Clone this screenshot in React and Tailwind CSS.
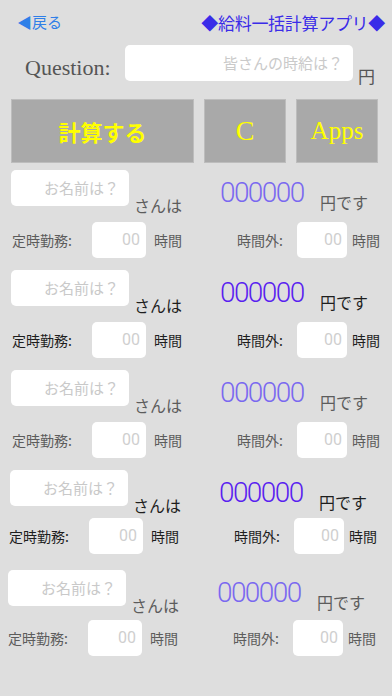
import React from 'react';

const rows = [
  { dark: false, nameMl: 'ml-[11px]', lineMl: 'ml-[12px]', lineMt: 'mt-[16px]' },
  { dark: true, nameMl: 'ml-[11px]', lineMl: 'ml-[12px]', lineMt: 'mt-[16px]' },
  { dark: false, nameMl: 'ml-[11px]', lineMl: 'ml-[12px]', lineMt: 'mt-[16px]' },
  { dark: true, nameMl: 'ml-[10px]', lineMl: 'ml-[9px]', lineMt: 'mt-[12px]' },
  { dark: false, nameMl: 'ml-[8px]', lineMl: 'ml-[8px]', lineMt: 'mt-[14px]' },
];

function WorkerRow({ dark, nameMl, lineMl, lineMt }) {
  const label = dark ? 'text-[#1e1e1e]' : 'text-[#5c5c5c]';
  const num = dark ? 'text-[#5a1ff0]' : 'text-[#7a68f0]';
  return (
    <div className="h-[100px]">
      <div className={`flex items-start h-[36px] ${nameMl}`}>
        <div className="w-[118px] h-[36px] bg-white rounded-[5px] flex items-center justify-end pr-[10px] text-[15px] text-[#c9c9c9]">
          お名前は？
        </div>
        <div className={`w-[91px] pl-[5px] mt-[25px] text-[16px] leading-[20px] ${label}`}>さんは</div>
        <div className={`w-[100px] mt-[6px] text-[28px] leading-[34px] font-light tracking-[-1.6px] ${num}`} style={{ fontFamily: 'Roboto, sans-serif' }}>
          000000
        </div>
        <div className={`mt-[22px] text-[16px] leading-[20px] ${label}`}>円です</div>
      </div>
      <div className={`flex items-center h-[36px] text-[14px] ${lineMl} ${lineMt} ${label}`}>
        <div className="w-[80px]">定時勤務:</div>
        <div className="w-[54px] h-[36px] bg-white rounded-[5px] flex items-center justify-end pr-[6px] text-[16px] text-[#cfcfcf]" style={{ fontFamily: 'Roboto, sans-serif' }}>
          00
        </div>
        <div className="w-[91px] pl-[8px]">時間</div>
        <div className="w-[60px]">時間外:</div>
        <div className="w-[50px] h-[36px] bg-white rounded-[5px] flex items-center justify-end pr-[5px] text-[16px] text-[#cfcfcf]" style={{ fontFamily: 'Roboto, sans-serif' }}>
          00
        </div>
        <div className="pl-[5px]">時間</div>
      </div>
    </div>
  );
}

export default function App() {
  return (
    <div
      className="w-[392px] h-[696px] bg-[#dedede] overflow-hidden"
      style={{ fontFamily: '"Noto Sans CJK JP", "Liberation Sans", sans-serif' }}
    >
      {/* header */}
      <div className="h-[45px] flex items-center justify-between pl-[17px] pr-[7px]">
        <span className="text-[15px] text-[#2f7fe8]">◀戻る</span>
        <span className="text-[17px] text-[#3a2ce8] tracking-[-0.3px]">◆給料一括計算アプリ◆</span>
      </div>

      {/* question */}
      <div className="h-[54px] flex items-start">
        <div
          className="w-[125px] pl-[25px] mt-[8px] text-[22px] leading-[30px] text-[#555]"
          style={{ fontFamily: '"Liberation Serif", serif' }}
        >
          Question:
        </div>
        <div className="w-[228px] h-[36px] bg-white rounded-[5px] flex items-center justify-end pr-[10px] text-[15px] text-[#cacaca]">
          皆さんの時給は？
        </div>
        <div className="pl-[5px] mt-[21px] text-[17px] leading-[20px] text-[#555]">円</div>
      </div>

      {/* buttons */}
      <div className="h-[71px] flex items-start pl-[11px] gap-[10px]">
        <button className="w-[183px] h-[64px] bg-[#a9a9a9] border border-[#bdbdbd] text-[#ffff00] text-[22px] font-bold">
          計算する
        </button>
        <button
          className="w-[82px] h-[64px] bg-[#a9a9a9] border border-[#bdbdbd] text-[#ffff00] text-[28px]"
          style={{ fontFamily: '"Liberation Serif", serif' }}
        >
          C
        </button>
        <button
          className="w-[82px] h-[64px] bg-[#a9a9a9] border border-[#bdbdbd] text-[#ffff00] text-[25px]"
          style={{ fontFamily: '"Liberation Serif", serif' }}
        >
          Apps
        </button>
      </div>

      {rows.map((r, i) => (
        <WorkerRow key={i} {...r} />
      ))}
    </div>
  );
}
